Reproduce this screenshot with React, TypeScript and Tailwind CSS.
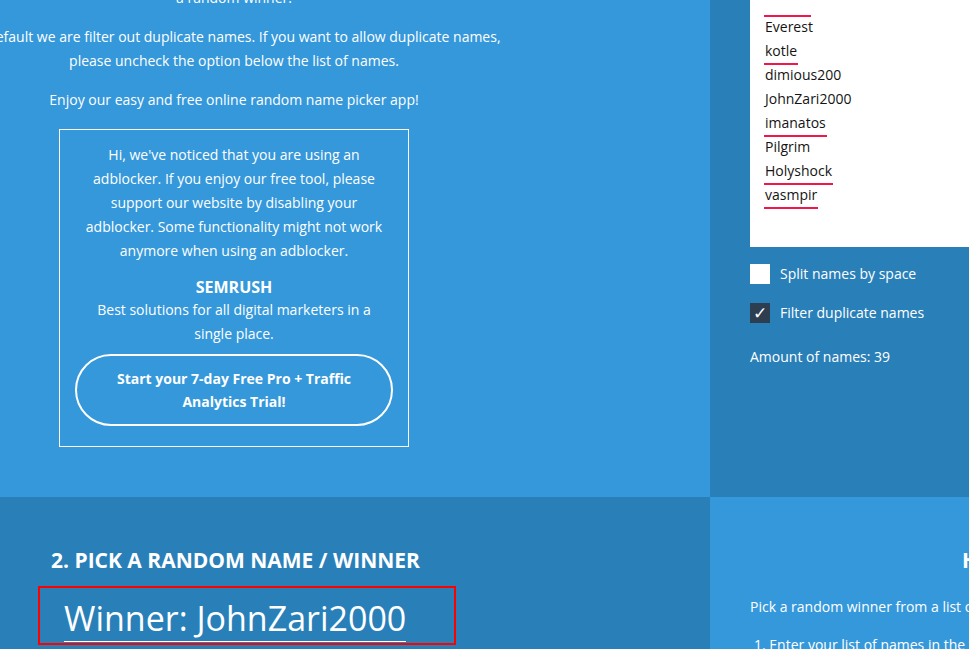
import React from "react";

const names = [
  { n: "Everest", u: false },
  { n: "kotle", u: true },
  { n: "dimious200", u: false },
  { n: "JohnZari2000", u: false },
  { n: "imanatos", u: true },
  { n: "Pilgrim", u: false },
  { n: "Holyshock", u: true },
  { n: "vasmpir", u: true },
];

export default function App() {
  return (
    <div
      className="w-[969px] h-[649px] overflow-hidden text-white"
      style={{ fontFamily: '"Open Sans", "Noto Sans", sans-serif' }}
    >
      <div className="flex w-[1200px]">
        {/* top-left */}
        <div className="w-[710px] h-[497px] bg-[#3498db] shrink-0 overflow-hidden">
          <div className="ml-[-46px] w-[560px] text-center text-[14px] leading-[24px] mt-[-38px]">
            <p className="mb-[15px] whitespace-nowrap">
              Everyone on the list has the same chance to become
              <br />a random winner.
            </p>
            <p className="mb-[15px] whitespace-nowrap">
              By default we are filter out duplicate names. If you want to allow duplicate names,
              <br />
              please uncheck the option below the list of names.
            </p>
            <p>Enjoy our easy and free online random name picker app!</p>
          </div>
          <div className="ml-[59px] mt-[17px] w-[350px] h-[318px] border border-white flex flex-col items-center pt-[13px] text-center text-[14px] leading-[24px]">
            <p className="px-[20px]">
              Hi, we've noticed that you are using an adblocker. If you enjoy our free tool, please support our
              website by disabling your adblocker. Some functionality might not work anymore when using an adblocker.
            </p>
            <p className="mt-[13px] font-bold text-[16px] leading-[22px]">SEMRUSH</p>
            <p className="px-[30px]">Best solutions for all digital marketers in a single place.</p>
            <div className="mt-[8px] w-[318px] h-[72px] rounded-[36px] border-2 border-white flex items-center justify-center px-[36px] font-bold leading-[23px]">
              Start your 7-day Free Pro + Traffic Analytics Trial!
            </div>
          </div>
        </div>
        {/* top-right */}
        <div className="w-[490px] h-[497px] bg-[#2980b9] shrink-0 pl-[40px]">
          <div className="bg-white h-[247px] pl-[15px] text-[14px] leading-[24px] text-[#141414]">
            <div className="h-[15px] relative">
              <span className="absolute left-[-1px] bottom-[-2px] w-[47px] h-[2px] bg-[#f0174a]" />
            </div>
            {names.map((x) => (
              <div key={x.n} className="h-[24px]">
                <span className="relative inline-block">
                  {x.n}
                  {x.u && <span className="absolute left-[-1px] right-[-1px] bottom-[-2px] h-[2px] bg-[#f0174a]" />}
                </span>
              </div>
            ))}
          </div>
          <div className="mt-[16px] flex items-center gap-[10px] text-[14px]">
            <div className="w-[20px] h-[20px] bg-white" />
            <span>Split names by space</span>
          </div>
          <div className="mt-[19px] flex items-center gap-[10px] text-[14px]">
            <div
              className="w-[20px] h-[20px] bg-[#2c3e50] flex items-center justify-center text-[17px] leading-none pt-[1px]"
              style={{ fontFamily: '"DejaVu Sans", sans-serif' }}
            >
              ✓
            </div>
            <span className="mt-[-2px]">Filter duplicate names</span>
          </div>
          <p className="mt-[23px] text-[14px]">Amount of names: 39</p>
        </div>
      </div>
      <div className="flex w-[1200px]">
        <div className="w-[710px] h-[200px] bg-[#2980b9] shrink-0 pt-[47px]">
          <h2 className="ml-[51px] text-[21px] font-bold leading-[32px] uppercase">2. Pick a random name / winner</h2>
          <div className="ml-[38px] mt-[10px] w-[418px] h-[59px] border-2 border-[#ff0000] pl-[24px] pt-[7px]">
            <span className="text-[34px] leading-[46px] border-b border-white inline-block">Winner: JohnZari2000</span>
          </div>
        </div>
        <div className="w-[490px] h-[200px] bg-[#3498db] shrink-0 pl-[40px] pt-[47px]">
          <h2 className="ml-[212px] text-[21px] font-bold leading-[32px] whitespace-nowrap">How to use</h2>
          <p className="mt-[19px] text-[14px] leading-[24px] whitespace-nowrap">
            Pick a random winner from a list of names in three easy steps:
          </p>
          <p className="mt-[14px] ml-[4px] text-[14px] leading-[24px] whitespace-nowrap">
            1. Enter your list of names in the field above
          </p>
        </div>
      </div>
    </div>
  );
}
